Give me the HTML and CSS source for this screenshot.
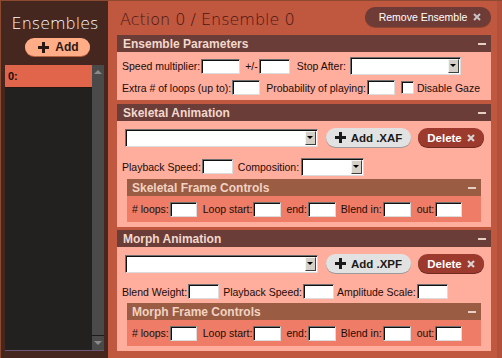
FILE: index.html
```html
<!DOCTYPE html>
<html>
<head>
  <meta name="viewport" content="width=device-width, initial-scale=1.0">
  <title>Ensembles</title>
  <link rel="stylesheet" href="styles.css">
</head>
<body>
  <div class="app">
    <aside class="sidebar">
      <h1 class="side-title">Ensembles</h1>
      <button class="btn-add">
        <svg width="11" height="11" viewBox="0 0 11 11"><path d="M5.5 0v11M0 5.5h11" stroke="currentColor" stroke-width="3"/></svg>
        Add
      </button>
      <div class="list">
        <div class="list-items">
          <div class="list-item selected">0:</div>
        </div>
        <div class="scrollbar">
          <div class="sb-btn up"><i></i></div>
          <div class="sb-track"></div>
          <div class="sb-btn down"><i></i></div>
        </div>
      </div>
    </aside>

    <main class="main">
      <div class="topbar">
        <h2 class="title">Action 0 / Ensemble 0</h2>
        <button class="btn-remove">Remove Ensemble
          <svg class="x" width="8" height="8" viewBox="0 0 8 8"><path d="M1 1l6 6M7 1l-6 6" stroke="currentColor" stroke-width="2"/></svg>
        </button>
      </div>

      <section class="panel">
        <div class="panel-head"><span>Ensemble Parameters</span><i class="minus"></i></div>
        <div class="panel-body body-params">
          <div class="row">
            <label>Speed multiplier:</label><input class="field w39">
            <label class="ml5">+/-</label><input class="field w31">
            <label class="ml7">Stop After:</label><div class="select w111 ml3"><i class="arrow"></i></div>
          </div>
          <div class="row row2">
            <label>Extra # of loops (up to):</label><input class="field w28">
            <label class="ml6">Probability of playing:</label><input class="field w28">
            <span class="check ml6"></span><label class="ml3">Disable Gaze</label>
          </div>
        </div>
      </section>

      <section class="panel">
        <div class="panel-head"><span>Skeletal Animation</span><i class="minus"></i></div>
        <div class="panel-body body-anim">
          <div class="row">
            <div class="select w193 ml3"><i class="arrow"></i></div>
            <button class="btn-pill btn-light">
              <svg width="11" height="11" viewBox="0 0 11 11"><path d="M5.5 0v11M0 5.5h11" stroke="currentColor" stroke-width="3"/></svg>
              Add .XAF
            </button>
            <button class="btn-pill btn-delete">Delete
              <svg class="x" width="8" height="8" viewBox="0 0 8 8"><path d="M1 1l6 6M7 1l-6 6" stroke="currentColor" stroke-width="2.2"/></svg>
            </button>
          </div>
          <div class="row row-mid">
            <label>Playback Speed:</label><input class="field w31">
            <label class="ml5">Composition:</label><div class="select w63 ml1"><i class="arrow"></i></div>
          </div>
          <div class="sub">
            <div class="sub-head"><span>Skeletal Frame Controls</span><i class="minus"></i></div>
            <div class="sub-body">
              <label># loops:</label><input class="field w27">
              <label class="ml6">Loop start:</label><input class="field w28">
              <label class="ml5">end:</label><input class="field w28">
              <label class="ml5">Blend in:</label><input class="field w28">
              <label class="ml6">out:</label><input class="field w27">
            </div>
          </div>
        </div>
      </section>

      <section class="panel">
        <div class="panel-head"><span>Morph Animation</span><i class="minus"></i></div>
        <div class="panel-body body-anim">
          <div class="row">
            <div class="select w193 ml3"><i class="arrow"></i></div>
            <button class="btn-pill btn-light">
              <svg width="11" height="11" viewBox="0 0 11 11"><path d="M5.5 0v11M0 5.5h11" stroke="currentColor" stroke-width="3"/></svg>
              Add .XPF
            </button>
            <button class="btn-pill btn-delete">Delete
              <svg class="x" width="8" height="8" viewBox="0 0 8 8"><path d="M1 1l6 6M7 1l-6 6" stroke="currentColor" stroke-width="2.2"/></svg>
            </button>
          </div>
          <div class="row row-mid morph">
            <label>Blend Weight:</label><input class="field w31">
            <label class="ml4">Playback Speed:</label><input class="field w31">
            <label class="ml3">Amplitude Scale:</label><input class="field w31">
          </div>
          <div class="sub sub-morph">
            <div class="sub-head"><span>Morph Frame Controls</span><i class="minus"></i></div>
            <div class="sub-body">
              <label># loops:</label><input class="field w27">
              <label class="ml6">Loop start:</label><input class="field w28">
              <label class="ml5">end:</label><input class="field w28">
              <label class="ml5">Blend in:</label><input class="field w28">
              <label class="ml6">out:</label><input class="field w27">
            </div>
          </div>
        </div>
      </section>
    </main>
  </div>
</body>
</html>
```

FILE: styles.css
```css
* {
  box-sizing: border-box;
}
body {
  margin: 0;
  font-family: "Liberation Sans", Arial, sans-serif;
  font-size: 10.5px;
  color: #1e0c08;
}
.app {
  display: flex;
  width: 502px;
  height: 358px;
  border-top: 1px solid #8c4b30;
  border-left: 1px solid #8c4b30;
  background: #c0573f;
}

/* sidebar */
.sidebar {
  width: 107px;
  flex: none;
  background: #45271f;
  display: flex;
  flex-direction: column;
  padding-top: 15px;
}
.side-title {
  margin: 0;
  text-align: center;
  font: 200 16px/16px "DejaVu Sans", sans-serif;
  color: #fff;
  padding-left: 1px;
}
.btn-add {
  margin: 6px 0 0 24px;
  width: 65px;
  height: 18px;
  border: none;
  border-radius: 9px;
  background: #ffad87;
  box-shadow: 0 1px 0 #b8603f;
  color: #2a1812;
  font: bold 12px "Liberation Sans", Arial, sans-serif;
  display: flex;
  align-items: center;
  justify-content: center;
  gap: 6px;
  padding: 0 0 0 2px;
}
.list {
  margin: 9px 4px 0;
  height: 286px;
  display: flex;
  background: #222120;
  border-bottom: 1px solid #6a5a78;
}
.list-items {
  flex: 1;
}
.list-item {
  height: 23px;
  line-height: 22px;
  padding-left: 3px;
  font-weight: bold;
  font-size: 11px;
  color: #1e0c08;
  border-bottom: 1px solid #2a1610;
}
.list-item.selected {
  background: #e0654b;
}
.scrollbar {
  width: 12px;
  background: #4a4a4a;
  display: flex;
  flex-direction: column;
}
.sb-btn {
  height: 13px;
  display: flex;
  align-items: center;
  justify-content: center;
}
.sb-btn.down {
  height: 15px;
  border-top: 1px solid #1c1c1c;
}
.sb-btn i {
  width: 0;
  height: 0;
  border-left: 4px solid transparent;
  border-right: 4px solid transparent;
}
.sb-btn.up i {
  border-bottom: 4px solid #8a8a8a;
}
.sb-btn.down i {
  border-top: 4px solid #8a8a8a;
}
.sb-track {
  flex: 1;
}

/* main */
.main {
  flex: 1;
  padding: 0 6px 0 9px;
  border-right: 5px solid #b3503b;
}
.topbar {
  height: 34px;
  display: flex;
  justify-content: space-between;
  align-items: flex-start;
}
.title {
  margin: 11px 0 0 3px;
  font: 200 16px/16px "DejaVu Sans", sans-serif;
  color: #4a1610;
}
.btn-remove {
  margin-top: 6px;
  width: 126px;
  height: 20px;
  border: none;
  border-radius: 10px;
  background: #6e3b36;
  box-shadow: 0 1px 0 #8e4532;
  color: #fff;
  font: 10.5px "Liberation Sans", Arial, sans-serif;
  display: flex;
  align-items: center;
  justify-content: center;
  gap: 6px;
  padding: 0 0 0 4px;
}
.btn-remove .x {
  color: #c9c3c2;
}

.panel {
  margin-bottom: 4px;
}
.panel + .panel + .panel {
  margin-top: -1px;
}
.panel-head {
  height: 17px;
  background: #6a3d38;
  color: #f2d8cd;
  font-weight: bold;
  font-size: 12px;
  display: flex;
  align-items: center;
  justify-content: space-between;
  padding: 0 5px 0 6px;
}
.minus {
  width: 8px;
  height: 2px;
  background: #e8cfc6;
}
.panel-body {
  background: #ffad9d;
  padding: 5px 5px 4px;
}
.body-params .row:first-child {
  height: 18px;
}
.row {
  display: flex;
  align-items: center;
}
.row2 {
  height: 17px;
  margin-top: 4px;
}
.body-anim {
  padding-top: 7px;
  padding-bottom: 5px;
}
.row-mid {
  height: 19px;
  margin-top: 10px;
}
.row-mid.morph {
  margin-top: 9px;
}
label {
  margin-right: 1px;
  white-space: nowrap;
}
.field {
  height: 15px;
  padding: 0;
  background: #fff;
  border: 1px solid;
  border-color: #6f6f6f #dcdcdc #dcdcdc #6f6f6f;
  box-shadow: inset 1px 1px 0 #111;
  font: 10px "Liberation Sans", Arial, sans-serif;
}
.select {
  height: 18px;
  background: #fff;
  border: 1px solid;
  border-color: #6f6f6f #dcdcdc #dcdcdc #6f6f6f;
  box-shadow: inset 1px 1px 0 #111;
  display: flex;
  align-items: center;
  justify-content: flex-end;
  padding-right: 1px;
}
.arrow {
  width: 11px;
  height: 14px;
  background: #d4d0c8;
  border: 1px solid;
  border-color: #f4f4f4 #404040 #404040 #f4f4f4;
  position: relative;
}
.arrow::after {
  content: "";
  position: absolute;
  left: 1px;
  top: 4px;
  border-left: 3px solid transparent;
  border-right: 3px solid transparent;
  border-top: 3px solid #000;
}
.check {
  width: 13px;
  height: 13px;
  background: #fff;
  border: 1px solid;
  border-color: #6f6f6f #dcdcdc #dcdcdc #6f6f6f;
  box-shadow: inset 1px 1px 0 #111;
}
.btn-pill {
  height: 19px;
  border: none;
  border-radius: 10px;
  font: bold 11.5px "Liberation Sans", Arial, sans-serif;
  display: flex;
  align-items: center;
  justify-content: center;
  gap: 5px;
  padding: 0;
}
.btn-light {
  width: 85px;
  margin-left: 8px;
  background: #e2e2e2;
  color: #1a1a1a;
  box-shadow: 0 1px 0 #9a9a9a;
}
.btn-delete {
  width: 66px;
  margin-left: 7px;
  background: #9c3a2e;
  color: #fff;
  box-shadow: 0 1px 0 #6e2a20;
}
.btn-delete .x {
  color: #d9d2d0;
}

.sub {
  margin: 3px 5px 0;
}
.sub-morph {
  margin-top: 2px;
}
.sub-head {
  height: 17px;
  background: #9a5d44;
  color: #f2d2c2;
  font-weight: bold;
  font-size: 12px;
  display: flex;
  align-items: center;
  justify-content: space-between;
  padding: 0 5px;
}
.sub-body {
  height: 26px;
  background: #ee7c66;
  display: flex;
  align-items: center;
  padding: 0 5px;
}

.w27 { width: 27px; }
.w28 { width: 28px; }
.w31 { width: 31px; }
.w39 { width: 39px; }
.w63 { width: 63px; }
.w111 { width: 111px; }
.w193 { width: 193px; }
.ml1 { margin-left: 1px; }
.ml2 { margin-left: 2px; }
.ml3 { margin-left: 3px; }
.ml4 { margin-left: 4px; }
.ml5 { margin-left: 5px; }
.ml6 { margin-left: 6px; }
.ml7 { margin-left: 7px; }
```
